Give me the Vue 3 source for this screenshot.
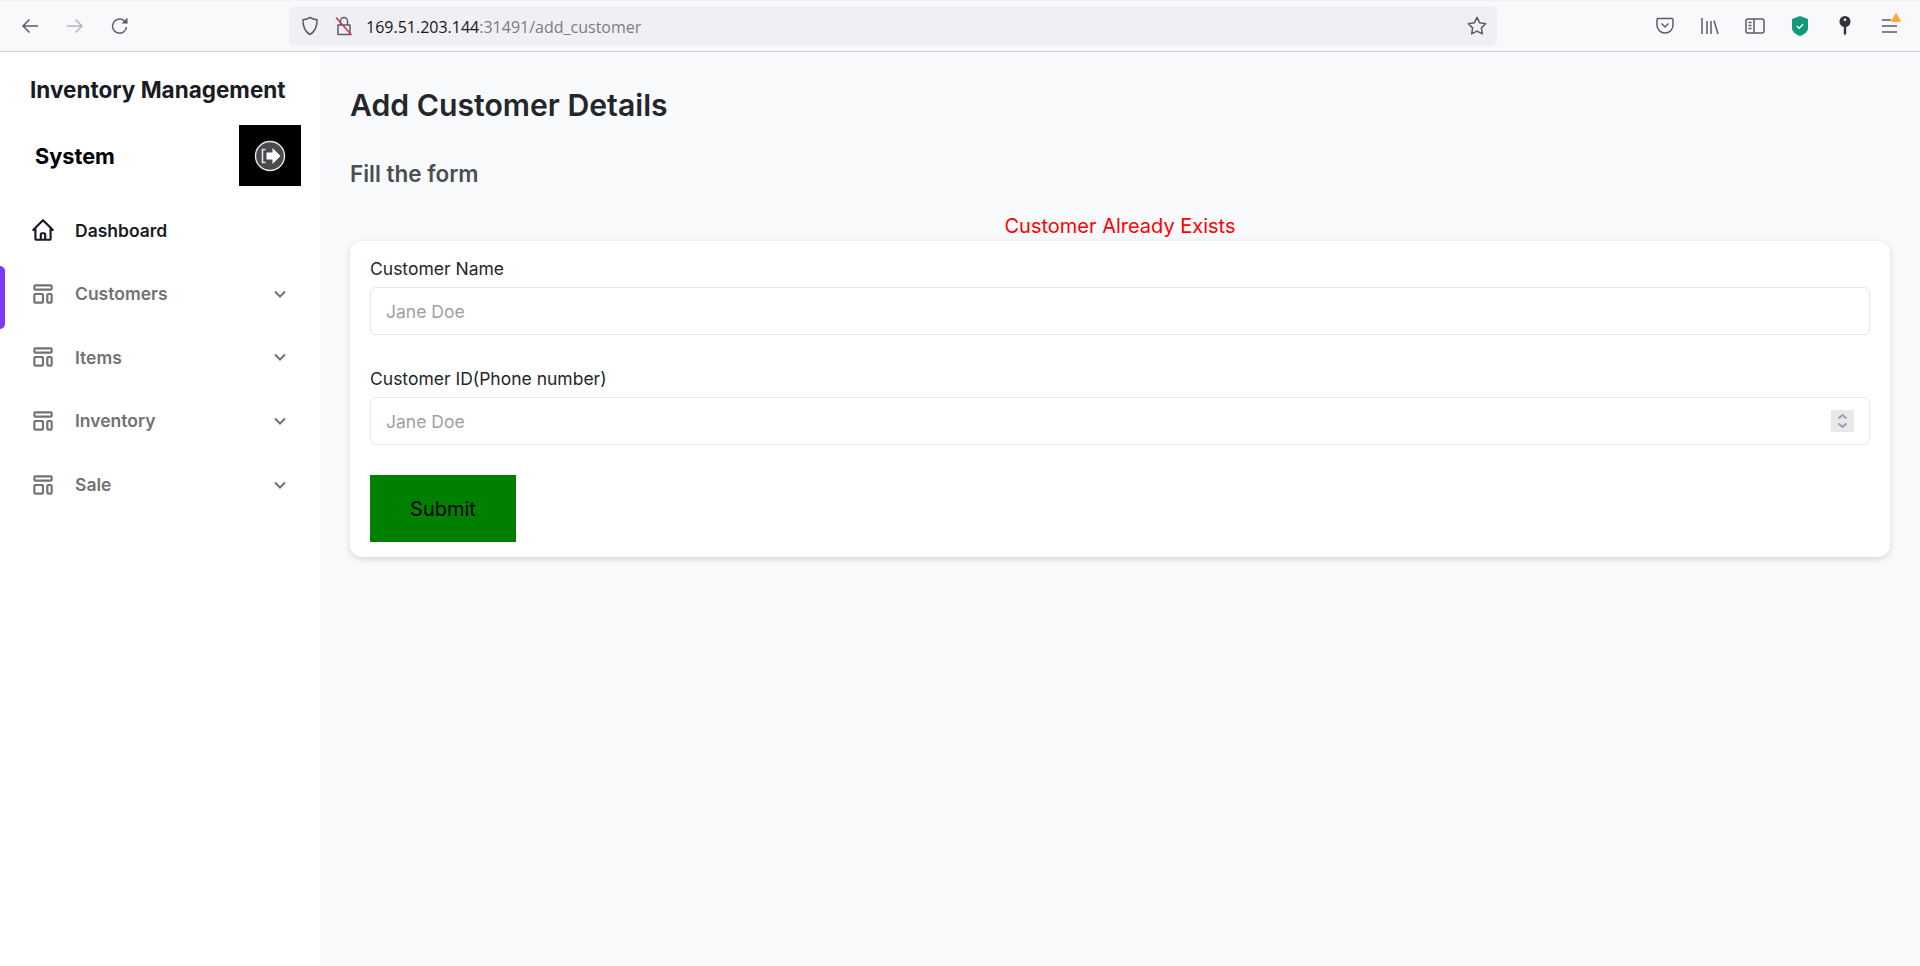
<script setup>
const navItems = ['Customers', 'Items', 'Inventory', 'Sale']
</script>

<template>
  <div class="page">
    <header class="toolbar">
      <div class="nav-btns">
        <svg class="tb-icon" viewBox="0 0 20 20"><path d="M18 10H3M9.500 3.500 3 10l6.500 6.500" fill="none" stroke="#5b5b66" stroke-width="1.500"/></svg>
        <svg class="tb-icon" viewBox="0 0 20 20"><path d="M2 10h15M10.500 3.500 17 10l-6.500 6.500" fill="none" stroke="#b4b4ba" stroke-width="1.500"/></svg>
        <svg class="tb-icon" viewBox="0 0 20 20"><path d="M16.500 11a7 7 0 1 1-2.500-6.300L17 7" fill="none" stroke="#5b5b66" stroke-width="1.500"/><path d="M17.500 1.500V7.500H11.500" fill="#5b5b66"/></svg>
      </div>
      <div class="urlbar">
        <svg class="shield" viewBox="0 0 20 20"><path d="M10 1.500c2 1.300 4 2 7 2.200.2 6.500-1.500 11.500-7 14.800C4.500 15.200 2.800 10.200 3 3.700 6 3.500 8 2.800 10 1.500z" fill="none" stroke="#5b5b66" stroke-width="1.500"/></svg>
        <svg class="lock" viewBox="0 0 20 20"><path d="M6.500 8.500V5a3.500 3.500 0 0 1 7 0v3.500M4 9h12v9.500H4z" fill="none" stroke="#5b5b66" stroke-width="1.500" stroke-linejoin="round"/><path d="M2 1.500 17.500 19" stroke="#e22850" stroke-width="1.500"/></svg>
        <span class="url"><span class="host">169.51.203.144</span>:31491/add_customer</span>
        <svg class="star" viewBox="0 0 20 20"><path d="m10 1.300 2.700 5.500 6 .9-4.350 4.200 1 6-5.350-2.800-5.350 2.800 1-6L1.300 7.700l6-.9z" fill="none" stroke="#5b5b66" stroke-width="1.500" stroke-linejoin="round"/></svg>
      </div>
      <div class="tools">
        <svg class="tb-icon" viewBox="0 0 20 20"><path d="M3.500 2.500h13A1.500 1.500 0 0 1 18 4v5a8 8 0 0 1-16 0V4a1.500 1.500 0 0 1 1.500-1.500z" fill="none" stroke="#5b5b66" stroke-width="1.500"/><path d="m6.500 7.500 3.500 3.500 3.500-3.500" fill="none" stroke="#5b5b66" stroke-width="1.500"/></svg>
        <svg class="tb-icon" viewBox="0 0 20 20"><path d="M2 2v16M7 5v13M11 5v13M14 4.500l4 13.500" fill="none" stroke="#5b5b66" stroke-width="1.500"/></svg>
        <svg class="tb-icon" viewBox="0 0 20 20"><rect x="1" y="3" width="18" height="14" rx="2" fill="none" stroke="#5b5b66" stroke-width="1.500"/><path d="M9 3v14" stroke="#5b5b66" stroke-width="1.500"/><path d="M3.500 6.500h3M3.500 9.500h3M3.500 12.500h3" stroke="#5b5b66" stroke-width="1.500"/></svg>
        <svg class="tb-icon" viewBox="0 0 20 20"><path d="M10 0 18 3v9c0 4-4 6.500-8 8-4-1.500-8-4-8-8V3z" fill="#10997a"/><path d="m6.800 10 2.300 2.200 4-4" fill="none" stroke="#fff" stroke-width="1.400"/></svg>
        <svg class="tb-icon" viewBox="0 0 20 20"><circle cx="10" cy="5.500" r="5.500" fill="#33333a"/><circle cx="10" cy="3.800" r="1.300" fill="#f9f9fb"/><path d="M8.800 9.500v8l1.200 2 1.200-2v-8z" fill="#33333a"/></svg>
        <div class="menu-wrap">
          <svg class="tb-icon" viewBox="0 0 20 20"><path d="M2 4h9M2 10h15M2 16h15" stroke="#5b5b66" stroke-width="1.500"/></svg>
          <svg class="badge" viewBox="0 0 10 9"><path d="M5 0.500 9.500 8.500H.5z" fill="#ffa436" stroke="#ffa436" stroke-linejoin="round"/></svg>
        </div>
      </div>
    </header>

    <div class="shell">
      <aside class="sidebar">
        <div class="brand">Inventory Management</div>
        <div class="brand-row">
          <span class="brand-sys">System</span>
          <button class="logout" aria-label="Log out">
            <svg viewBox="0 0 32 32" width="32" height="32"><circle cx="16" cy="16" r="14.500" fill="#4a4a4f" stroke="#e6e6e6" stroke-width="1.400"/><path d="M11.500 9.500H8.500v13h3" fill="none" stroke="#e6e6e6" stroke-width="1.600"/><path d="M12.500 12.500h6V8l8 8-8 8v-4.500h-6z" fill="#fff"/></svg>
          </button>
        </div>
        <nav class="nav">
          <a class="nav-row active-home">
            <svg class="nav-icon" viewBox="0 0 24 24"><path d="M3 12l2-2m0 0l7-7 7 7M5 10v10a1 1 0 001 1h3m10-11l2 2m-2-2v10a1 1 0 01-1 1h-3m-6 0a1 1 0 001-1v-4a1 1 0 011-1h2a1 1 0 011 1v4a1 1 0 001 1m-6 0h6" fill="none" stroke="#1a1c23" stroke-width="2" stroke-linejoin="round" stroke-linecap="round"/></svg>
            <span class="nav-label">Dashboard</span>
          </a>
          <a v-for="(item, i) in navItems" :key="item" class="nav-row">
            <span v-if="i === 0" class="marker"></span>
            <svg class="nav-icon" viewBox="0 0 24 24"><path d="M4 5a1 1 0 011-1h14a1 1 0 011 1v2a1 1 0 01-1 1H5a1 1 0 01-1-1V5zM4 13a1 1 0 011-1h6a1 1 0 011 1v6a1 1 0 01-1 1H5a1 1 0 01-1-1v-6zM16 13a1 1 0 011-1h2a1 1 0 011 1v6a1 1 0 01-1 1h-2a1 1 0 01-1-1v-6z" fill="none" stroke="#707275" stroke-width="2" stroke-linejoin="round"/></svg>
            <span class="nav-label">{{ item }}</span>
            <svg class="chev" viewBox="0 0 20 20"><path d="m5 7.500 5 5 5-5" fill="none" stroke="#707275" stroke-width="2"/></svg>
          </a>
        </nav>
      </aside>

      <main class="main">
        <h1 class="title">Add Customer Details</h1>
        <h2 class="subtitle">Fill the form</h2>
        <div class="alert">Customer Already Exists</div>
        <form class="card" @submit.prevent>
          <label class="field">
            <span class="label">Customer Name</span>
            <input class="input" type="text" placeholder="Jane Doe" />
          </label>
          <label class="field second">
            <span class="label">Customer ID(Phone number)</span>
            <span class="input-wrap">
              <input class="input" type="text" placeholder="Jane Doe" />
              <span class="spin">
                <svg viewBox="0 0 23 22" width="23" height="22"><path d="m7.500 8.500 4-3.500 4 3.500M7.500 13.500l4 3.500 4-3.500" fill="none" stroke="#9b9aa6" stroke-width="1.800"/></svg>
              </span>
            </span>
          </label>
          <button class="submit" type="submit">Submit</button>
        </form>
      </main>
    </div>
  </div>
</template>

<style>
html, body { margin: 0; padding: 0; }
</style>

<style scoped>
.page {
  width: 1920px;
  height: 966px;
  display: flex;
  flex-direction: column;
  overflow: hidden;
  font-family: Inter, "Liberation Sans", sans-serif;
  background: #f9fafb;
}
.toolbar {
  height: 50px;
  flex: none;
  display: flex;
  align-items: center;
  background: #f9f9fb;
  border-top: 1px solid #f0f0f4;
  border-bottom: 1px solid #cfcfd8;
}
.tb-icon { width: 20px; height: 20px; flex: none; display: block; }
.nav-btns {
  width: 289px;
  flex: none;
  box-sizing: border-box;
  padding-left: 20px;
  display: flex;
  gap: 25px;
}
.urlbar {
  width: 1208px;
  height: 40px;
  flex: none;
  box-sizing: border-box;
  display: flex;
  align-items: center;
  padding: 0 10px 0 11px;
  background: #f0f0f4;
  border-radius: 6px;
}
.shield { width: 20px; height: 20px; flex: none; }
.lock { width: 20px; height: 20px; flex: none; margin-left: 14px; }
.url {
  margin-left: 12px;
  padding-top: 1px;
  flex: 1;
  font: 16px "Open Sans", "Noto Sans", sans-serif;
  color: #7c7c84;
}
.host { color: #15141a; }
.star { width: 20px; height: 20px; flex: none; }
.tools {
  flex: 1;
  display: flex;
  justify-content: flex-end;
  gap: 25px;
  padding-right: 20px;
}
.menu-wrap { position: relative; width: 20px; height: 20px; }
.badge { position: absolute; right: -1px; top: -3px; width: 10px; height: 9px; }

.shell { flex: 1; display: flex; min-height: 0; }
.sidebar {
  width: 320px;
  flex: none;
  background: #fff;
  box-sizing: border-box;
  padding-top: 20px;
}
.brand {
  margin-left: 30px;
  font-size: 22.5px;
  line-height: 36px;
  font-weight: 700;
  color: #1a1c23;
  white-space: nowrap;
}
.brand-row {
  display: flex;
  align-items: center;
  justify-content: space-between;
  padding: 17px 19px 0 35px;
}
.brand-sys { font-size: 21.7px; font-weight: 700; color: #000; }
.logout {
  width: 62px;
  height: 61px;
  padding: 0;
  border: 0;
  background: #000;
  display: flex;
  align-items: center;
  justify-content: center;
}
.nav { margin-top: 12.4px; }
.nav-row {
  position: relative;
  height: 63.6px;
  display: flex;
  align-items: center;
  padding: 0 30px;
  color: #707275;
}
.nav-icon { width: 26px; height: 26px; flex: none; }
.nav-label { margin-left: 19px; flex: 1; font-size: 17.5px; font-weight: 600; }
.active-home { color: #1a1c23; }
.chev { width: 20px; height: 20px; flex: none; }
.marker {
  position: absolute;
  left: 0;
  top: 4px;
  width: 5px;
  height: 63px;
  background: #7e3af2;
  border-radius: 0 6px 6px 0;
}

.main { flex: 1; box-sizing: border-box; padding: 0 30px; min-width: 0; }
.title {
  margin: 0;
  padding-top: 33px;
  font-size: 30.2px;
  line-height: 40px;
  font-weight: 600;
  color: #24262d;
}
.subtitle {
  margin: 33px 0 0;
  font-size: 22.5px;
  line-height: 32px;
  font-weight: 600;
  color: #4c4f52;
}
.alert {
  margin-top: 22px;
  text-align: center;
  font-size: 20px;
  line-height: 28px;
  color: #f00;
}
.card {
  height: 316px;
  margin-top: 1px;
  box-sizing: border-box;
  padding: 14px 20px 0;
  background: #fff;
  border-radius: 12px;
  box-shadow: 0 2px 7px rgba(0, 0, 0, 0.15);
}
.field { display: block; }
.second { margin-top: 30px; }
.label { display: block; font-size: 17.5px; line-height: 28px; color: #24262d; }
.input-wrap { position: relative; display: block; }
.input {
  display: block;
  width: 100%;
  height: 48px;
  margin-top: 4px;
  box-sizing: border-box;
  padding: 0 15px;
  border: 1px solid #e2e6ee;
  border-radius: 6px;
  background: #fff;
  font: 17.5px Inter, sans-serif;
  color: #24262d;
  outline: none;
}
.input::placeholder { color: #a0a0a0; opacity: 1; }
.spin {
  position: absolute;
  right: 16px;
  top: 13px;
  width: 23px;
  height: 22px;
  background: #e8e8ec;
  display: block;
}
.spin svg { display: block; }
.submit {
  display: block;
  width: 146px;
  height: 67px;
  margin-top: 30px;
  border: 0;
  padding: 0;
  background: #008000;
  color: #000;
  font: 20px Inter, sans-serif;
}
</style>
